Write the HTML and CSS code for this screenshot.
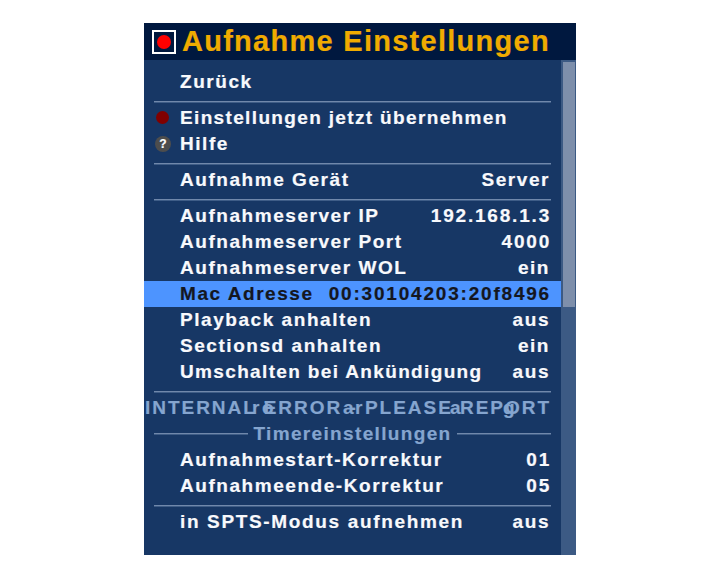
FILE: index.html
```html
<!DOCTYPE html>
<html lang="de">
<head>
    <meta charset="UTF-8">
    <title>Aufnahme Einstellungen</title>
    <link rel="stylesheet" href="styles.css">
</head>
<body>
    <div class="panel">
        <div class="header">
            <span class="rec-box"><span class="rec-dot"></span></span>
            <h1>Aufnahme Einstellungen</h1>
        </div>
        <div class="content">
            <div class="menu">
                <div class="row"><span>Zurück</span></div>
                <div class="sep"></div>
                <div class="row"><span class="dot"></span><span class="tight">Einstellungen jetzt übernehmen</span></div>
                <div class="row"><span class="help">?</span><span>Hilfe</span></div>
                <div class="sep"></div>
                <div class="row"><span>Aufnahme Gerät</span><span>Server</span></div>
                <div class="sep"></div>
                <div class="row"><span>Aufnahmeserver IP</span><span class="num">192.168.1.3</span></div>
                <div class="row"><span>Aufnahmeserver Port</span><span class="num">4000</span></div>
                <div class="row"><span>Aufnahmeserver WOL</span><span>ein</span></div>
                <div class="row selected"><span>Mac Adresse</span><span class="num">00:30104203:20f8496</span></div>
                <div class="row"><span>Playback anhalten</span><span>aus</span></div>
                <div class="row"><span>Sectionsd anhalten</span><span>ein</span></div>
                <div class="row"><span class="tight">Umschalten bei Ankündigung</span><span>aus</span></div>
                <div class="sep"></div>
                <div class="row disabled">
                    <span class="error">INTERNAL ERROR - PLEASE REPORT</span>
                    <span class="frag frag-1">r</span>
                    <span class="frag frag-2">ö</span>
                    <span class="frag frag-3">ar</span>
                    <span class="frag frag-4">a</span>
                    <span class="frag frag-5">g</span>
                </div>
                <div class="row title-row"><span class="title-line"></span><span class="tight">Timereinstellungen</span><span class="title-line"></span></div>
                <div class="row"><span>Aufnahmestart-Korrektur</span><span class="num">01</span></div>
                <div class="row"><span>Aufnahmeende-Korrektur</span><span class="num">05</span></div>
                <div class="sep"></div>
                <div class="row"><span class="wide">in SPTS-Modus aufnehmen</span><span>aus</span></div>
            </div>
            <div class="scrollbar"><div class="thumb"></div></div>
        </div>
    </div>
</body>
</html>
```

FILE: styles.css
```css
body {
  margin: 0;
  height: 576px;
  background: #fff;
  font-family: "Liberation Sans", Arial, sans-serif;
  font-weight: bold;
  display: flex;
  justify-content: center;
}

.panel {
  width: 432px;
  height: 532px;
  margin-top: 23px;
  display: flex;
  flex-direction: column;
  background: #173765;
}

.header {
  height: 37px;
  background: #00183f;
  display: flex;
  align-items: center;
  padding-left: 8px;
  gap: 6px;
}

.header h1 {
  margin: 0;
  font-size: 29px;
  letter-spacing: 1.27px;
  color: #f0ab00;
  -webkit-text-stroke: 0.2px #f0ab00;
}

.rec-box {
  width: 24px;
  height: 24px;
  box-sizing: border-box;
  border: 2px solid #fff;
  background: #00183f;
  display: flex;
  align-items: center;
  justify-content: center;
}

.rec-dot {
  width: 14px;
  height: 14px;
  border-radius: 50%;
  background: #ff0000;
}

.content {
  flex: 1;
  display: flex;
}

.menu {
  flex: 1;
  padding-top: 9px;
}

.row {
  position: relative;
  height: 26px;
  padding: 0 11px 0 36px;
  display: flex;
  align-items: center;
  justify-content: space-between;
  font-size: 19px;
  letter-spacing: 1.55px;
  color: #f8f9fc;
  -webkit-text-stroke: 0.2px currentColor;
}

.tight {
  letter-spacing: 1.35px;
}

.wide {
  letter-spacing: 1.65px;
}

.num {
  letter-spacing: 1.8px;
  margin-right: -1px;
}

.sep {
  height: 10px;
  margin: 0 10px;
  padding-top: 6px;
  box-sizing: border-box;
}

.sep::before {
  content: "";
  display: block;
  height: 1px;
  background: #7088ab;
  border-bottom: 1px solid #3f5d87;
}

.dot {
  position: absolute;
  left: 12px;
  top: 6px;
  width: 13px;
  height: 13px;
  border-radius: 50%;
  background: #800000;
}

.help {
  position: absolute;
  left: 11px;
  top: 5px;
  width: 16px;
  height: 16px;
  border-radius: 50%;
  background: #4d4d4d;
  color: #fff;
  font-size: 12px;
  letter-spacing: 0;
  line-height: 16px;
  text-align: center;
}

.selected {
  background: #4d94ff;
  color: #14171f;
}

.disabled {
  color: #85a5cf;
}

.error {
  position: absolute;
  left: 0;
  width: 408px;
  text-align: center;
  white-space: nowrap;
  letter-spacing: 1.97px;
}

/* zweiter Text, der in der Zeile unter der Fehlermeldung liegt */
.frag {
  position: absolute;
  top: 2px;
}

.frag-1 { left: 108px; }
.frag-2 { left: 118px; }
.frag-3 { left: 199px; }
.frag-4 { left: 306px; }
.frag-5 { left: 359px; }

.title-row {
  padding: 0 10px;
  gap: 5px;
  color: #85a5cf;
}

.title-line {
  flex: 1;
  height: 1px;
  background: #7088ab;
  border-bottom: 1px solid #3f5d87;
}

.scrollbar {
  width: 15px;
  background: #3c5a84;
  padding: 2px 1px 0 2px;
  box-sizing: border-box;
}

.thumb {
  height: 245px;
  background: #7e8fab;
}
```
